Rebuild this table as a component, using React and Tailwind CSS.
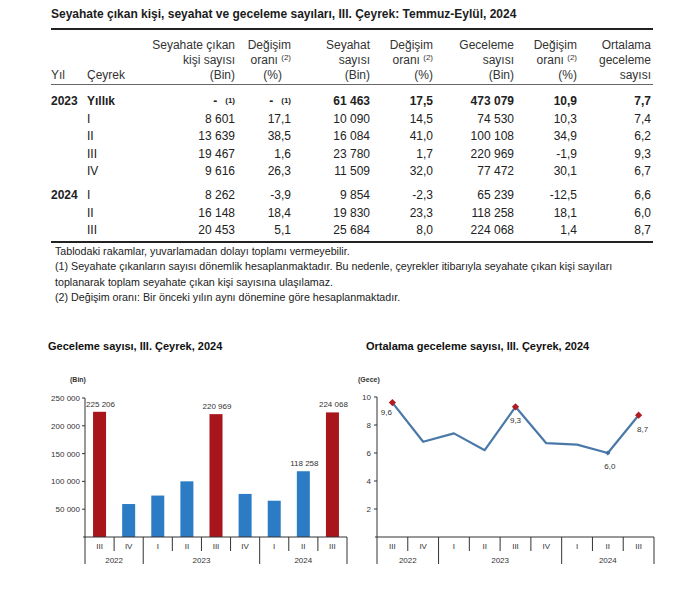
import React from 'react';

const cols = 'grid grid-cols-[36px_60px_88px_56px_79px_63px_81px_63px_74px]';

const rows2023 = [
  { q: 'Yıllık', v: ['-', '-', '61 463', '17,5', '473 079', '10,9', '7,7'], bold: true },
  { q: 'I', v: ['8 601', '17,1', '10 090', '14,5', '74 530', '10,3', '7,4'] },
  { q: 'II', v: ['13 639', '38,5', '16 084', '41,0', '100 108', '34,9', '6,2'] },
  { q: 'III', v: ['19 467', '1,6', '23 780', '1,7', '220 969', '-1,9', '9,3'] },
  { q: 'IV', v: ['9 616', '26,3', '11 509', '32,0', '77 472', '30,1', '6,7'] },
];

const rows2024 = [
  { q: 'I', v: ['8 262', '-3,9', '9 854', '-2,3', '65 239', '-12,5', '6,6'] },
  { q: 'II', v: ['16 148', '18,4', '19 830', '23,3', '118 258', '18,1', '6,0'] },
  { q: 'III', v: ['20 453', '5,1', '25 684', '8,0', '224 068', '1,4', '8,7'] },
];

const quarters = ['III', 'IV', 'I', 'II', 'III', 'IV', 'I', 'II', 'III'];
const years = [['2022', 0, 2], ['2023', 2, 6], ['2024', 6, 9]];

function Row({ year, row }) {
  return (
    <div className={`${cols} h-[17.6px] items-center ${row.bold ? 'font-bold' : ''}`}>
      <div>{year}</div>
      <div>{row.q}</div>
      {row.v.map((v, i) => (
        <div key={i} className="text-right">
          {v}
          {row.bold && i < 2 && <sup className="text-[8px] ml-[8px] relative -top-[2px]">(1)</sup>}
        </div>
      ))}
    </div>
  );
}

function Axis({ x0, x1, y0 }) {
  const w = (x1 - x0) / 9;
  return (
    <g>
      <line x1={x0 - 2} y1={y0} x2={x1} y2={y0} stroke="#333" strokeWidth="1" />
      {Array.from({ length: 10 }).map((_, i) => {
        const big = i === 0 || i === 2 || i === 6 || i === 9;
        return <line key={i} x1={x0 + i * w} y1={y0} x2={x0 + i * w} y2={big ? 563 : 550} stroke="#333" strokeWidth="1" />;
      })}
      {quarters.map((q, i) => (
        <text key={i} x={x0 + (i + 0.5) * w} y={548} fontSize="8" textAnchor="middle" fill="#333">{q}</text>
      ))}
      {years.map(([y, a, b]) => (
        <text key={y} x={x0 + ((a + b) / 2) * w} y={562} fontSize="8" textAnchor="middle" fill="#333">{y}</text>
      ))}
    </g>
  );
}

function BarChart() {
  const x0 = 85, x1 = 347, y0 = 536;
  const w = (x1 - x0) / 9;
  const sy = (v) => y0 - (v / 250000) * 139;
  const bars = [
    [225206, true, '225 206'], [59300], [74530], [100108], [220969, true, '220 969'],
    [77472], [65239], [118258, false, '118 258'], [224068, true, '224 068'],
  ];
  return (
    <svg width="310" height="205" viewBox="40 365 310 205">
      <text x="70" y="381" fontSize="7" fontWeight="bold" fill="#333">(Bin)</text>
      <line x1={x0} y1={397} x2={x0} y2={y0} stroke="#333" strokeWidth="1" />
      {[250000, 200000, 150000, 100000, 50000].map((v) => (
        <g key={v}>
          <line x1={x0 - 3} y1={sy(v)} x2={x0} y2={sy(v)} stroke="#333" strokeWidth="1" />
          <text x={x0 - 5} y={sy(v) + 3} fontSize="8" textAnchor="end" fill="#333">
            {String(v).replace(/(\d+)(\d{3})$/, '$1 $2')}
          </text>
        </g>
      ))}
      {bars.map(([v, red, label], i) => {
        const cx = x0 + (i + 0.5) * w;
        return (
          <g key={i}>
            <rect x={cx - 6.5} y={sy(v)} width="13" height={y0 - sy(v)} fill={red ? '#a8161c' : '#2b7cc4'} />
            {label && (
              <text x={cx + 1} y={sy(v) - 5} fontSize="8" textAnchor="middle" fill="#333">{label}</text>
            )}
          </g>
        );
      })}
      <Axis x0={x0} x1={x1} y0={y0} />
    </svg>
  );
}

function LineChart() {
  const x0 = 377, x1 = 654, y0 = 536;
  const w = (x1 - x0) / 9;
  const sy = (v) => y0 - v * 14;
  const vals = [9.6, 6.8, 7.4, 6.2, 9.3, 6.7, 6.6, 6.0, 8.7];
  const pts = vals.map((v, i) => [x0 + (i + 0.5) * w, sy(v)]);
  const diamond = (x, y, r) => `${x},${y - r} ${x + r},${y} ${x},${y + r} ${x - r},${y}`;
  const labels = [
    [0, '9,6', -6, 12],
    [4, '9,3', 0, 16],
    [8, '8,7', 4, 17],
    [7, '6,0', 2, 16],
  ];
  return (
    <svg width="347" height="205" viewBox="350 365 347 205">
      <text x="358" y="381" fontSize="7" fontWeight="bold" fill="#333">(Gece)</text>
      <line x1={x0} y1={396} x2={x0} y2={y0} stroke="#333" strokeWidth="1" />
      {[10, 8, 6, 4, 2].map((v) => (
        <g key={v}>
          <line x1={x0 - 3} y1={sy(v)} x2={x0} y2={sy(v)} stroke="#333" strokeWidth="1" />
          <text x={x0 - 6} y={sy(v) + 3} fontSize="8" textAnchor="end" fill="#333">{v}</text>
        </g>
      ))}
      <polyline points={pts.map((p) => p.join(',')).join(' ')} fill="none" stroke="#4a78a8" strokeWidth="2.2" strokeLinejoin="round" />
      {[0, 4, 8].map((i) => (
        <polygon key={i} points={diamond(pts[i][0], pts[i][1], 3.6)} fill="#b01c24" />
      ))}
      <polygon points={diamond(pts[7][0], pts[7][1], 2.6)} fill="#3f6fa6" />
      {labels.map(([i, t, dx, dy]) => (
        <text key={t} x={pts[i][0] + dx} y={pts[i][1] + dy} fontSize="8" textAnchor="middle" fill="#333">{t}</text>
      ))}
      <Axis x0={x0} x1={x1} y0={y0} />
    </svg>
  );
}

export default function App() {
  return (
    <div className="w-[697px] h-[601px] bg-white text-[#1c1c1c] font-['Liberation_Sans',Arial,sans-serif] overflow-hidden">
      <div className="ml-[51px] w-[602px] pt-[6px]">
        <h1 className="text-[12px] leading-[16px] font-bold">
          Seyahate çıkan kişi, seyahat ve geceleme sayıları, III. Çeyrek: Temmuz-Eylül, 2024
        </h1>
        <div className="mt-[6px] border-t-2 border-[#222]" />
        <div className={`${cols} text-[12px] leading-[15px] items-end pt-[8px] pb-[1px] border-b border-[#666] text-[#333]`}>
          <div>Yıl</div>
          <div>Çeyrek</div>
          <div className="text-right">Seyahate çıkan<br />kişi sayısı<br />(Bin)</div>
          <div className="text-right">
            Değişim<br />oranı <sup className="text-[8px]">(2)</sup><br /><span className="pr-[9px]">(%)</span>
          </div>
          <div className="text-right">Seyahat<br />sayısı<br />(Bin)</div>
          <div className="text-right">
            Değişim<br />oranı <sup className="text-[8px]">(2)</sup><br />(%)
          </div>
          <div className="text-right">Geceleme<br />sayısı<br />(Bin)</div>
          <div className="text-right">
            Değişim<br />oranı <sup className="text-[8px]">(2)</sup><br />(%)
          </div>
          <div className="text-right">Ortalama<br />geceleme<br />sayısı</div>
        </div>
        <div className="text-[12px] pt-[7px] text-[#222]">
          {rows2023.map((r, i) => (
            <Row key={i} year={i === 0 ? <span className="font-bold">2023</span> : ''} row={r} />
          ))}
          <div className="h-[6px]" />
          {rows2024.map((r, i) => (
            <Row key={i} year={i === 0 ? <span className="font-bold">2024</span> : ''} row={r} />
          ))}
        </div>
        <div className="mt-[2px] border-t-2 border-[#222]" />
      </div>
      <div className="ml-[55px] mt-[1px] text-[10.7px] leading-[15.5px] text-[#222]">
        <p>Tablodaki rakamlar, yuvarlamadan dolayı toplamı vermeyebilir.</p>
        <p>(1) Seyahate çıkanların sayısı dönemlik hesaplanmaktadır. Bu nedenle, çeyrekler itibarıyla seyahate çıkan kişi sayıları</p>
        <p>toplanarak toplam seyahate çıkan kişi sayısına ulaşılamaz.</p>
        <p>(2) Değişim oranı: Bir önceki yılın aynı dönemine göre hesaplanmaktadır.</p>
      </div>
      <div className="flex ml-[40px] mt-[33px]">
        <div className="w-[310px]">
          <h2 className="pl-[8px] text-[11px] leading-[14px] font-bold text-[#111]">Geceleme sayısı, III. Çeyrek, 2024</h2>
          <div className="mt-[13px]">
            <BarChart />
          </div>
        </div>
        <div className="w-[347px]">
          <h2 className="pl-[16px] text-[11px] leading-[14px] font-bold text-[#111]">Ortalama geceleme sayısı, III. Çeyrek, 2024</h2>
          <div className="mt-[13px]">
            <LineChart />
          </div>
        </div>
      </div>
    </div>
  );
}
